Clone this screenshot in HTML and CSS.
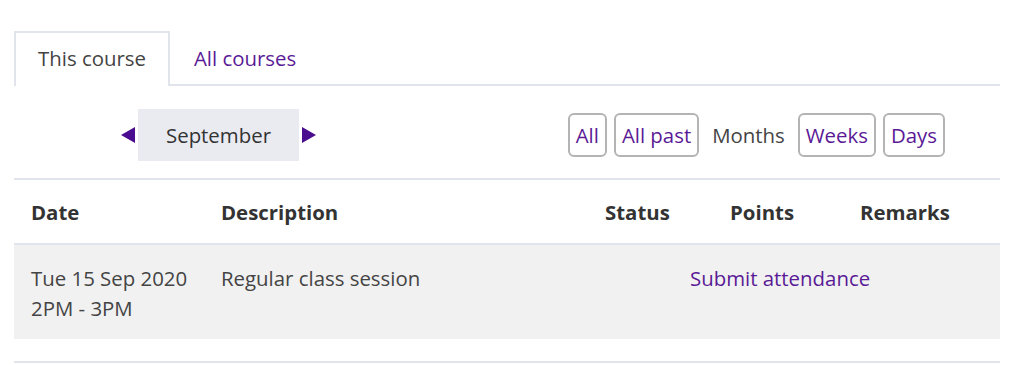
FILE: index.html
```html
<!DOCTYPE html>
<html lang="en">
<head>
    <meta charset="UTF-8">
    <title>Attendance</title>
    <link rel="stylesheet" href="styles.css">
</head>
<body>
    <div class="page">
        <ul class="tabs">
            <li class="tab active">This course</li>
            <li class="tab"><a href="#">All courses</a></li>
        </ul>

        <div class="toolbar">
            <div class="month-nav">
                <a href="#" class="arrow arrow-left"></a>
                <span class="month">September</span>
                <a href="#" class="arrow arrow-right"></a>
            </div>
            <div class="views">
                <a href="#" class="view-btn">All</a>
                <a href="#" class="view-btn">All past</a>
                <span class="view-current">Months</span>
                <a href="#" class="view-btn">Weeks</a>
                <a href="#" class="view-btn">Days</a>
            </div>
        </div>

        <div class="table-wrap">
            <table class="sessions">
                <colgroup>
                    <col class="col-date">
                    <col class="col-desc">
                    <col class="col-status">
                    <col class="col-points">
                    <col class="col-remarks">
                </colgroup>
                <thead>
                    <tr>
                        <th>Date</th>
                        <th>Description</th>
                        <th>Status</th>
                        <th>Points</th>
                        <th>Remarks</th>
                    </tr>
                </thead>
                <tbody>
                    <tr>
                        <td class="date">Tue 15 Sep 2020<br>2PM - 3PM</td>
                        <td>Regular class session</td>
                        <td colspan="3" class="action"><a href="#">Submit attendance</a></td>
                    </tr>
                </tbody>
            </table>
        </div>
    </div>
</body>
</html>
```

FILE: styles.css
```css
body {
    margin: 0;
    font-family: "Open Sans", Arial, sans-serif;
    font-size: 20.4px;
    color: #444;
    background: white;
}
a {
    color: #5a1a96;
    text-decoration: none;
}
.page {
    margin: 31px 24px 0 14px;
}
.tabs {
    display: flex;
    list-style: none;
    margin: 0;
    padding: 0;
    border-bottom: 2px solid #e1e4ea;
}
.tab {
    padding: 0 22px;
    height: 53px;
    line-height: 51px;
    border: 2px solid transparent;
    border-bottom: none;
    margin-bottom: -2px;
}
.tab.active {
    border-color: #e1e4ea;
    background: white;
    color: #444;
}
.toolbar {
    display: flex;
    justify-content: space-between;
    align-items: center;
    margin: 23px 0 17px;
}
.month-nav {
    display: flex;
    align-items: center;
    gap: 3px;
    margin-left: 107px;
}
.arrow {
    width: 0;
    height: 0;
    border-top: 8px solid transparent;
    border-bottom: 8px solid transparent;
}
.arrow-left {
    border-right: 14px solid #4b0d8f;
}
.arrow-right {
    border-left: 14px solid #4b0d8f;
}
.month {
    background: #e9ebf1;
    color: #333;
    height: 52px;
    line-height: 52px;
    padding: 0 28px;
}
.views {
    display: flex;
    align-items: center;
    gap: 7px;
    margin-right: 55px;
}
.view-btn {
    border: 2px solid #b4b4b4;
    border-radius: 6px;
    height: 40px;
    line-height: 40px;
    padding: 0 6px;
}
.view-current {
    padding: 0 6px;
}
.table-wrap {
    border-bottom: 2px solid #e1e4ea;
    padding-bottom: 22px;
}
.sessions {
    width: 100%;
    border-collapse: collapse;
    table-layout: fixed;
    border-top: 2px solid #e1e4ea;
}
.col-date { width: 190px; }
.col-desc { width: 384px; }
.col-status { width: 125px; }
.col-points { width: 130px; }
.col-remarks { width: 157px; }
.sessions th {
    text-align: left;
    color: #333;
    font-weight: bold;
    height: 63px;
    padding: 0 17px;
    border-bottom: 2px solid #e1e4ea;
}
.sessions td {
    background: #f1f1f1;
    line-height: 30px;
    vertical-align: top;
    padding: 18px 17px 16px;
}
.sessions td.date {
    white-space: nowrap;
}
.sessions td.action {
    padding-left: 102px;
}
```
